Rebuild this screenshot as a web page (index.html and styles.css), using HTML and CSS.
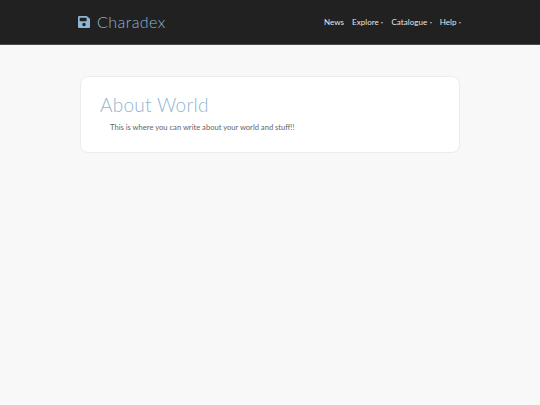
FILE: index.html
```html
<!DOCTYPE html>
<html lang="en">
<head>
    <meta charset="UTF-8">
    <meta name="viewport" content="width=device-width, initial-scale=1.0">
    <title>Charadex</title>
    <link rel="stylesheet" href="styles.css">
</head>
<body>
    <nav class="navbar">
        <div class="nav-inner">
            <a class="brand" href="#">
                <svg class="brand-icon" viewBox="0 0 448 512" aria-hidden="true">
                    <path d="M433.9 129.9l-83.9-83.9A48 48 0 0 0 316.1 32H48C21.5 32 0 53.5 0 80v352c0 26.5 21.5 48 48 48h352c26.5 0 48-21.5 48-48V163.9a48 48 0 0 0-14.1-34zM224 416c-35.3 0-64-28.7-64-64 0-35.3 28.7-64 64-64s64 28.7 64 64c0 35.3-28.7 64-64 64zm96-304.5V212c0 6.6-5.4 12-12 12H76c-6.6 0-12-5.4-12-12V108c0-6.6 5.4-12 12-12h228.5c3.2 0 6.2 1.3 8.5 3.5l3.5 3.5c2.3 2.3 3.5 5.3 3.5 8.5z"/>
                </svg>
                <span>Charadex</span>
            </a>
            <ul class="nav-links">
                <li>News</li>
                <li>Explore<span class="caret"></span></li>
                <li>Catalogue<span class="caret"></span></li>
                <li>Help<span class="caret"></span></li>
            </ul>
        </div>
    </nav>

    <main class="content">
        <section class="card">
            <h1>About World</h1>
            <p>This is where you can write about your world and stuff!!</p>
        </section>
    </main>
</body>
</html>
```

FILE: styles.css
```css
* {
    margin: 0;
    padding: 0;
    box-sizing: border-box;
}

body {
    font-family: 'Lato', 'Open Sans', sans-serif;
    background: #f8f8f8;
    height: 100vh;
    overflow: hidden;
}

.navbar {
    height: 45px;
    background: #212121;
    border-bottom: 1px solid #4a4a4a;
}

.nav-inner {
    width: 384px;
    height: 44px;
    margin: 0 auto;
    padding-right: 1px;
    display: flex;
    align-items: center;
    justify-content: space-between;
}

.brand {
    display: flex;
    align-items: center;
    gap: 7px;
    margin-bottom: 1px;
    color: #8fb6d2;
    font-size: 16px;
    font-weight: 300;
    letter-spacing: 0.45px;
    text-decoration: none;
}

.brand-icon {
    width: 12px;
    height: 14px;
    fill: #8fb6d2;
}

.nav-links {
    display: flex;
    gap: 8px;
    list-style: none;
    color: #e6e6e6;
    font-size: 8px;
    letter-spacing: 0.05px;
}

.caret {
    display: inline-block;
    width: 0;
    height: 0;
    margin-left: 2.5px;
    vertical-align: 1px;
    border-top: 2px solid #b4b4b4;
    border-left: 1.5px solid transparent;
    border-right: 1.5px solid transparent;
}

.content {
    padding-top: 31px;
}

.card {
    width: 380px;
    height: 77px;
    margin: 0 auto;
    padding: 17px 19px 0;
    background: #fff;
    border: 1px solid #ececec;
    border-radius: 8px;
}

.card h1 {
    color: #8fb6d2;
    font-size: 19px;
    font-weight: 300;
    line-height: 22px;
    letter-spacing: 0.3px;
}

.card p {
    margin-top: 5px;
    padding-left: 10px;
    color: #666;
    font-size: 7.6px;
    line-height: 12px;
}
```
